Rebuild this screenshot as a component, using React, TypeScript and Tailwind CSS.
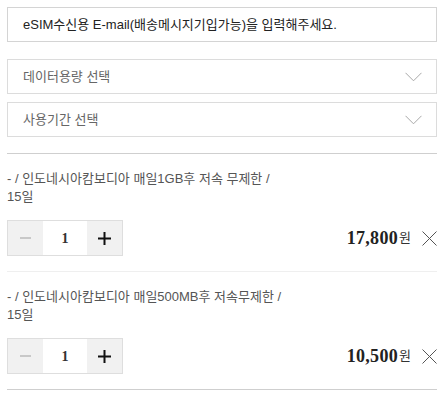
import React from "react";

interface CartItem {
  id: number;
  name: string;
  period: string;
  qty: number;
  price: string;
}

const items: CartItem[] = [
  { id: 1, name: "- / 인도네시아캄보디아 매일1GB후 저속 무제한 /", period: "15일", qty: 1, price: "17,800" },
  { id: 2, name: "- / 인도네시아캄보디아 매일500MB후 저속무제한 /", period: "15일", qty: 1, price: "10,500" },
];

const font = { fontFamily: '"Liberation Sans", "Noto Sans CJK KR", sans-serif' };

const Chevron = () => (
  <svg width="17" height="10" viewBox="0 0 17 10" fill="none" stroke="#a8a8a8" strokeWidth="1">
    <path d="M0.5 0.8 L8.5 8.8 L16.5 0.8" />
  </svg>
);

const CloseIcon = () => (
  <svg width="15" height="15" viewBox="0 0 15 15" fill="none" stroke="#555" strokeWidth="1">
    <path d="M0.5 0.5 L14.5 14.5 M14.5 0.5 L0.5 14.5" />
  </svg>
);

const App: React.FC = () => {
  return (
    <div className="w-[448px] h-[402px] bg-white pt-[7px] pl-[7px] overflow-hidden" style={font}>
      <div className="w-[430px]">
        {/* email input */}
        <div className="h-[35px] border border-[#d4d4d4] flex items-center px-[15px] text-[13px] text-[#222]">
          eSIM수신용 E-mail(배송메시지기입가능)을 입력해주세요.
        </div>

        {/* selects */}
        <div className="mt-[17px] flex flex-col gap-[8px]">
          {["데이터용량 선택", "사용기간 선택"].map((label) => (
            <div
              key={label}
              className="h-[35px] border border-[#dcdcdc] flex items-center justify-between pl-[15px] pr-[14px] text-[13px] text-[#666]"
            >
              <span>{label}</span>
              <Chevron />
            </div>
          ))}
        </div>

        {/* cart list */}
        <div className="mt-[16px] border-t border-b border-[#cfcfcf]">
          {items.map((item, i) => (
            <div
              key={item.id}
              className={`pt-[16px] pb-[15px] ${i > 0 ? "border-t border-[#efefef]" : ""}`}
            >
              <div className="text-[13px] leading-[18px] text-[#555] whitespace-nowrap">
                {item.name}
                <br />
                {item.period}
              </div>
              <div className="mt-[14px] flex items-center justify-between">
                <div className="flex h-[36px] border border-[#dedede]">
                  <button className="w-[35px] bg-[#f1f1f1] flex items-center justify-center">
                    <span className="block w-[11px] h-[2px] bg-[#c8c8c8]" />
                  </button>
                  <div
                    className="w-[44px] bg-white flex items-center justify-center text-[14px] font-bold text-[#333]"
                    style={{ fontFamily: '"Liberation Serif", serif' }}
                  >
                    {item.qty}
                  </div>
                  <button className="w-[35px] bg-[#f1f1f1] flex items-center justify-center">
                    <svg width="13" height="13" viewBox="0 0 13 13">
                      <path d="M5.5 0h2v13h-2z M0 5.5h13v2H0z" fill="#111" />
                    </svg>
                  </button>
                </div>
                <div className="flex items-center">
                  <span
                    className="text-[18px] font-bold text-[#222] tracking-[0.3px]"
                    style={{ fontFamily: '"Liberation Serif", serif' }}
                  >
                    {item.price}
                  </span>
                  <span className="text-[13px] text-[#333] ml-[1px]">원</span>
                  <span className="ml-[11px] flex items-center">
                    <CloseIcon />
                  </span>
                </div>
              </div>
            </div>
          ))}
        </div>
      </div>
    </div>
  );
};

export default App;
